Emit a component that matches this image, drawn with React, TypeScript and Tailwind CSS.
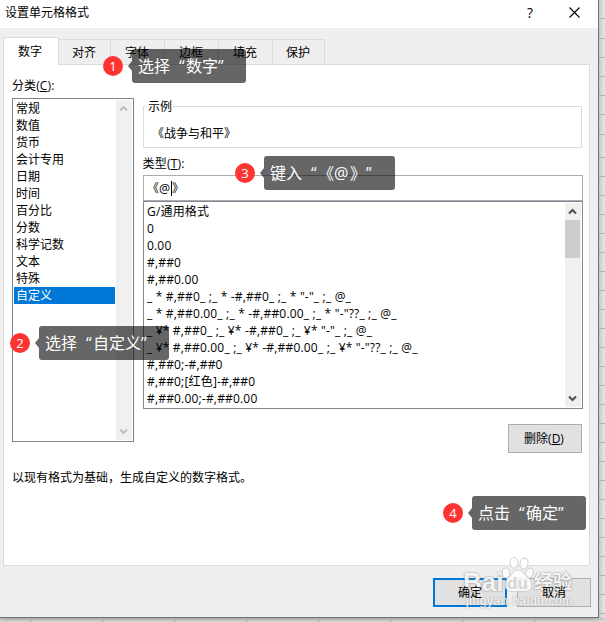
import type { ReactNode } from 'react';

const categories = ['常规', '数值', '货币', '会计专用', '日期', '时间', '百分比', '分数', '科学记数', '文本', '特殊', '自定义'];

const formats = [
  'G/通用格式',
  '0',
  '0.00',
  '#,##0',
  '#,##0.00',
  '_ * #,##0_ ;_ * -#,##0_ ;_ * "-"_ ;_ @_ ',
  '_ * #,##0.00_ ;_ * -#,##0.00_ ;_ * "-"??_ ;_ @_ ',
  '_ ¥* #,##0_ ;_ ¥* -#,##0_ ;_ ¥* "-"_ ;_ @_ ',
  '_ ¥* #,##0.00_ ;_ ¥* -#,##0.00_ ;_ ¥* "-"??_ ;_ @_ ',
  '#,##0;-#,##0',
  '#,##0;[红色]-#,##0',
  '#,##0.00;-#,##0.00',
];

const tabs = [
  { label: '对齐', width: 'w-[52px]' },
  { label: '字体', width: 'w-[54px]' },
  { label: '边框', width: 'w-[54px]' },
  { label: '填充', width: 'w-[54px]' },
  { label: '保护', width: 'w-[52px]' },
];

const sheetRows = [18, 19, 18, 18, 18, 18, 19, 22];

function Chevron({ up = false, color }: { up?: boolean; color: string }) {
  return (
    <svg width="9" height="7" viewBox="0 0 9 7" className={up ? '' : 'rotate-180'}>
      <path d="M1 5.500 4.500 2 8 5.500" fill="none" stroke={color} strokeWidth="2.100" />
    </svg>
  );
}

function Callout({ n, place, width, children }: { n: number; place: string; width: string; children: ReactNode }) {
  return (
    <div className={`absolute flex h-[34px] items-center ${place}`}>
      <div className="flex size-5 items-center justify-center rounded-full bg-[#fc3533] font-['Open_Sans',sans-serif] text-[13px] leading-none text-white">
        {n}
      </div>
      <svg width="4" height="10" viewBox="0 0 4 10" className="ml-[5px]">
        <path d="M4 0 0 5l4 5z" fill="#000" fillOpacity=".6" />
      </svg>
      <div className={`flex h-[34px] items-center rounded-[3px] bg-black/60 pl-[6px] text-[16px] leading-none whitespace-pre text-white ${width}`}>
        {children}
      </div>
    </div>
  );
}

function Quote({ close = false }: { close?: boolean }) {
  return <span className={close ? 'inline-block w-[8px]' : 'inline-block w-[16px] pl-[9px]'}>{close ? '”' : '“'}</span>;
}

function Watermark() {
  return (
    <div className="absolute top-[556px] left-[464px] h-[56px] w-[112px] text-white/90">
      <svg width="34" height="38" viewBox="0 0 34 38" className="absolute top-0 left-[36px]" fill="#fff" fillOpacity=".8" stroke="#c6c6c6" strokeWidth=".8">
        <ellipse cx="6" cy="17" rx="3.800" ry="5" transform="rotate(-12 6 17)" />
        <ellipse cx="14" cy="6.700" rx="4" ry="5.500" />
        <ellipse cx="24" cy="7.500" rx="4" ry="5.500" transform="rotate(12 24 7.500)" />
        <ellipse cx="29.500" cy="17" rx="3.700" ry="5" transform="rotate(15 29.500 17)" />
        <path d="M18 14c-5 0-6 5-10 8.500-5 4-4 12 3 13 4 .5 10-.5 14 0 8 0 8-8.500 4-13-4-3-6-8.500-11-8.500Z" />
      </svg>
      <span className="absolute top-[11px] left-[-1px] font-['Liberation_Sans',sans-serif] text-[26px] leading-[30px] font-bold [text-shadow:0_0_2px_#777]">Bai</span>
      <span className="absolute top-[19px] left-[43px] font-['Liberation_Sans',sans-serif] text-[17px] leading-[18px] font-bold text-[#d5d5d5]">du</span>
      <span className="absolute top-[14px] left-[70px] text-[19px] leading-[24px] font-bold [text-shadow:0_0_2px_#777]">经验</span>
      <span className="absolute top-[38px] left-[2px] font-['Liberation_Sans',sans-serif] text-[12px] leading-[14px] tracking-[.6px] [text-shadow:0_0_2px_#888]">jingyan.baidu.com</span>
    </div>
  );
}

export default function App() {
  return (
    <div className="relative h-[622px] w-[605px] overflow-hidden bg-[#e1e1e1] font-['Open_Sans','Noto_Sans_CJK_SC',sans-serif] text-[12px] leading-[17px] text-black">
      <div className="flex h-[618px]">
        <div className="flex w-[599px] flex-col border-r border-b border-[#707070] bg-[#efefef] shadow-[0_0_6px_rgba(0,0,0,0.35)]">
          <header className="flex h-7 shrink-0 items-center bg-white pl-[5px]">
            <span className="mt-[-3px] flex-1">设置单元格格式</span>
            <span className="mt-[-4px] w-[10px] text-[14px] font-medium">?</span>
            <svg width="11" height="11" viewBox="0 0 11 11" className="mt-[-4px] mr-[18px] ml-[32px]">
              <path d="m.5.500 10 10m0-10-10 10" stroke="#000" strokeWidth="1.100" />
            </svg>
          </header>

          <nav className="flex h-9 shrink-0 items-end pl-[3px]">
            <div className="relative mb-[-1px] flex h-7 w-14 justify-center border border-b-0 border-[#dcdcdc] bg-white pt-[5px] pr-[2px]">数字</div>
            {tabs.map((t) => (
              <div key={t.label} className={`flex h-[25px] justify-center border-t border-r border-[#dcdcdc] pt-[4px] pr-px ${t.width}`}>
                {t.label}
              </div>
            ))}
          </nav>

          <main className="ml-[3px] h-[502px] w-[587px] shrink-0 border border-[#dcdcdc] bg-white pl-2">
            <div className="flex gap-[9px]">
              <section className="w-[122px] pt-[12px]">
                <div className="tracking-[.1px]">分类(<u>C</u>):</div>
                <div className="mt-[4px] flex h-[344px] border border-[#7f828b] p-px">
                  <ul className="flex-1">
                    {categories.map((c) => (
                      <li key={c} className={c === '自定义' ? 'mr-px h-[17px] bg-[#0078d7] pl-[2px] text-white' : 'h-[17px] pl-[2px]'}>
                        {c}
                      </li>
                    ))}
                  </ul>
                  <div className="flex w-4 flex-col items-center justify-between bg-[#f0f0f0] pt-[5px] pr-[2px] pb-[5px]">
                    <Chevron up color="#bfbfbf" />
                    <Chevron color="#bfbfbf" />
                  </div>
                </div>
              </section>

              <section className="w-[440px] pt-[33px]">
                <fieldset className="mr-px h-[50px] border border-[#dcdcdc] pl-[8px]">
                  <legend className="ml-[-5px] h-[17px] pr-px pl-px">示例</legend>
                  <div className="pt-[10px]">《战争与和平》</div>
                </fieldset>
                <div className="mt-[7px] ml-[-.5px] tracking-[.2px]">类型(<u>T</u>):</div>
                <div className="mt-[3px] flex h-[26px] items-center border border-[#abadb3] pl-[3px]">
                  <span>《</span>
                  <span className="w-[12px] text-[12.500px]">@</span>
                  <span className="h-[15px] w-px bg-black" />
                  <span>》</span>
                </div>
                <div className="flex h-[208px] border border-[#828790] p-px">
                  <ul className="flex-1 pl-[2px]">
                    {formats.map((f) => (
                      <li key={f} className="h-[17px] tracking-[.18px] whitespace-pre">{f}</li>
                    ))}
                  </ul>
                  <div className="flex w-4 flex-col items-center bg-[#f0f0f0]">
                    <div className="flex h-[17px] items-center pr-[2px]"><Chevron up color="#505050" /></div>
                    <div className="h-[38px] w-full pr-px"><div className="h-full bg-[#cdcdcd]" /></div>
                    <div className="flex flex-1 items-end pr-[2px] pb-[5px]"><Chevron color="#505050" /></div>
                  </div>
                </div>
                <div className="mt-[15px] flex justify-end pr-px">
                  <button className="h-[29px] w-[74px] border border-[#adadad] bg-[#e1e1e1] pr-[2px]">删除(<u>D</u>)</button>
                </div>
              </section>
            </div>
            <p className="mt-[16px]">以现有格式为基础，生成自定义的数字格式。</p>
          </main>

          <footer className="flex justify-end gap-[10px] pt-[12px] pr-[7px]">
            <button className="h-[29px] w-[74px] border-2 border-[#0078d7] bg-[#e1e1e1]"><span className="relative z-10">确定</span></button>
            <button className="h-[29px] w-[74px] border border-[#adadad] bg-[#e1e1e1]"><span className="relative z-10">取消</span></button>
          </footer>
        </div>
        <div className="flex w-[6px] flex-col bg-linear-to-r from-[#cacaca] to-[#e7e7e7]">
          {sheetRows.map((h, i) => (
            <div key={i} className="box-content shrink-0 border-b border-[#b3b3b3]" style={{ height: h }} />
          ))}
          {Array.from({ length: 24 }, (_, i) => (
            <div key={i} className="h-[19px] shrink-0 border-b border-[#b3b3b3]" />
          ))}
        </div>
      </div>
      <div className="flex h-1 bg-linear-to-b from-[#c8c8c8] to-[#dedede]">
        <div className="w-8 shrink-0 border-r border-[#b3b3b3]" />
        {Array.from({ length: 7 }, (_, i) => (
          <div key={i} className="w-[72px] shrink-0 border-r border-[#b3b3b3]" />
        ))}
      </div>

      <Callout n={1} place="left-[103px] top-[49px]" width="w-[114px]">选择<Quote />数字<Quote close /></Callout>
      <Callout n={2} place="left-[10px] top-[326px]" width="w-[130px]">选择<Quote />自定义<Quote close /></Callout>
      <Callout n={3} place="left-[235px] top-[156px]" width="w-[131px]">
        键入<Quote />《<span className="inline-block w-[16px]">@</span>》<Quote close />
      </Callout>
      <Callout n={4} place="left-[443px] top-[496px]" width="w-[114px]">点击<Quote />确定<Quote close /></Callout>
      <Watermark />
    </div>
  );
}
